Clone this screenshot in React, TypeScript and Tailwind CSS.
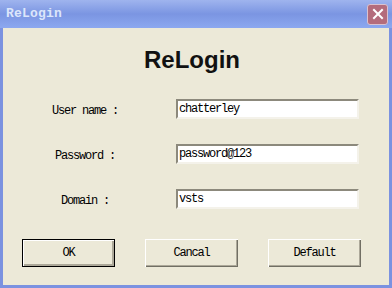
import React from "react";

const mono = { fontFamily: '"Liberation Mono", "DejaVu Sans Mono", monospace' };

const fields = [
  { label: "User name :", value: "chatterley" },
  { label: "Password :", value: "password@123" },
  { label: "Domain :", value: "vsts" },
];

const buttons = ["OK", "Cancal", "Default"];

export default function App() {
  return (
    <div className="w-[392px] h-[288px] flex flex-col bg-[#7b92e0] overflow-hidden">
      {/* title bar */}
      <div className="h-[28px] flex items-center justify-between pl-[6px] pr-[4px] bg-gradient-to-b from-[#9fb4ee] via-[#7b95e2] to-[#8ca8f0]">
        <span
          className="text-[13px] font-bold text-[#dce6fb] tracking-[0.2px]"
          style={mono}
        >
          ReLogin
        </span>
        <div className="w-[21px] h-[21px] rounded-[3px] border border-[#d9c2d0] bg-[#b46c7c] flex items-center justify-center">
          <svg viewBox="0 0 12 12" className="w-[12px] h-[12px]">
            <path d="M2 2 L10 10 M10 2 L2 10" stroke="white" strokeWidth="2" strokeLinecap="square" />
          </svg>
        </div>
      </div>

      {/* body */}
      <div className="flex-1 mx-[3px] mb-[3px] bg-[#ece9d8] flex flex-col">
        <h1
          className="mt-[18px] mr-[8px] h-[28px] leading-[28px] text-center text-[24px] font-bold text-[#111]"
          style={{ fontFamily: '"Liberation Sans", Arial, sans-serif' }}
        >
          ReLogin
        </h1>

        <div className="mt-[25px] flex flex-col gap-[25px]">
          {fields.map((f) => (
            <div key={f.label} className="flex items-center h-[20px]">
              <span
                className="w-[164px] text-center text-[12px] tracking-[-1.2px] text-black pt-[3px]"
                style={mono}
              >
                {f.label}
              </span>
              <div className="ml-[9px] w-[183px] h-[20px] bg-white border-2 border-t-[#8c897c] border-l-[#8c897c] border-b-[#f4f2ea] border-r-[#f4f2ea] flex items-center pl-[1px]">
                <span className="text-[12px] tracking-[-1.2px] text-black" style={mono}>
                  {f.value}
                </span>
              </div>
            </div>
          ))}
        </div>

        <div className="mt-[30px] flex pl-[19px] gap-[30px]">
          {buttons.map((b, i) => (
            <button
              key={b}
              type="button"
              className={
                i === 0
                  ? "w-[93px] h-[28px] border border-black bg-[#ece9d8] shadow-[inset_1px_1px_0_#ffffff,inset_-2px_-2px_0_#aca899] flex items-center justify-center"
                  : "w-[93px] h-[28px] bg-[#ece9d8] shadow-[inset_1px_1px_0_#ffffff,inset_-1px_-1px_0_#716f64,inset_-2px_-2px_0_#aca899] flex items-center justify-center"
              }
            >
              <span className="text-[12px] tracking-[-1.2px] text-black" style={mono}>
                {b}
              </span>
            </button>
          ))}
        </div>
      </div>
    </div>
  );
}
